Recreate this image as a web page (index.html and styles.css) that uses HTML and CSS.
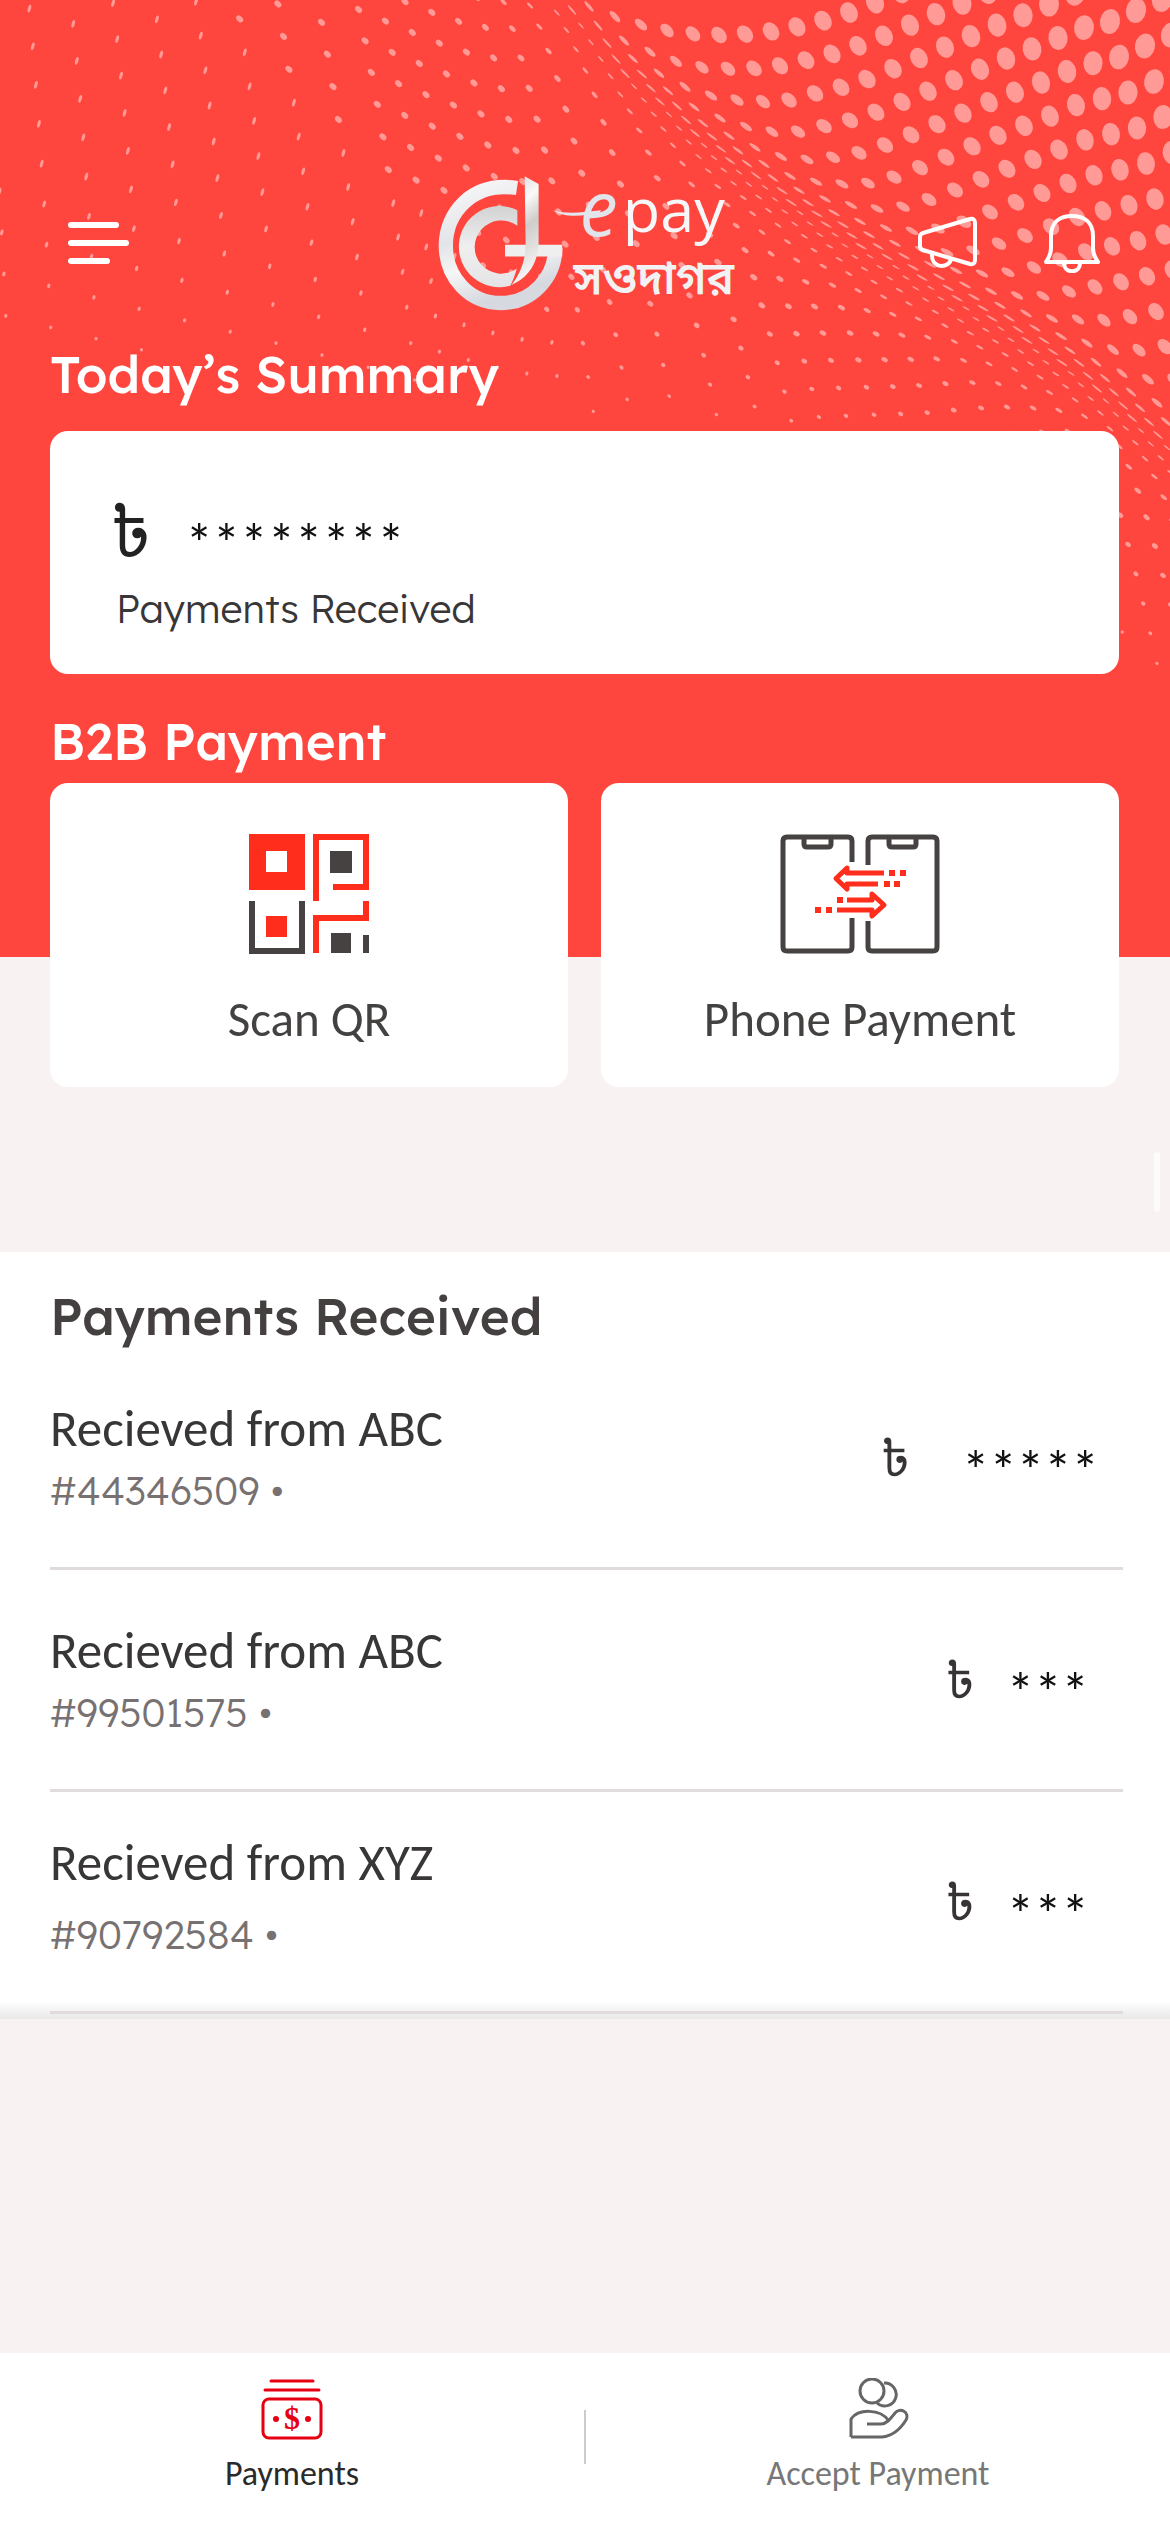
FILE: index.html
```html
<!DOCTYPE html>
<html lang="en">
<head>
<meta charset="utf-8">
<meta name="viewport" content="width=device-width">
<title>epay সওদাগর</title>
<link rel="stylesheet" href="styles.css">
</head>
<body>
<header class="hero">
  <svg class="halftone" id="halftone" viewBox="0 0 1170 957" preserveAspectRatio="xMaxYMin slice" aria-hidden="true"></svg>
  <div class="topbar">
    <button class="icon-btn" type="button" aria-label="Menu">
      <svg width="62" height="44" viewBox="0 0 62 44" fill="none" stroke="#fff" stroke-width="6" stroke-linecap="round"><path d="M3 4H48M3 22H58M3 40H39"/></svg>
    </button>
    <svg class="logo" width="297" height="138" viewBox="50 40 890 415" role="img" aria-label="epay সওদাগর">
      <defs>
        <linearGradient id="ring" x1="0" y1="0" x2="0.3" y2="1"><stop offset="0" stop-color="#f7f7f8"/><stop offset=".45" stop-color="#e3e4e8"/><stop offset=".7" stop-color="#f6f6f7"/><stop offset="1" stop-color="#d6d9e0"/></linearGradient>
        <linearGradient id="core" x1="0" y1="0" x2="0" y2="1"><stop offset="0" stop-color="#d4d3d4"/><stop offset=".5" stop-color="#f0efef"/><stop offset="1" stop-color="#e4e4e6"/></linearGradient>
        <linearGradient id="stem" x1="0" y1="0" x2="0.2" y2="1"><stop offset="0" stop-color="#d5d5d7"/><stop offset=".3" stop-color="#fafafa"/><stop offset=".55" stop-color="#cfccca"/><stop offset="1" stop-color="#f5f5f5"/></linearGradient>
      </defs>
      <path d="M292 82C155 62 78 158 78 255C78 352 150 428 243 428C335 428 407 352 407 262" fill="none" stroke="url(#ring)" stroke-width="43"/>
      <path d="M293 149A122 122 0 1 0 272 376C280 360 286 345 291 325A80 80 0 1 1 293 196Z" fill="url(#core)"/>
      <path d="M256 253H428V288H256Z" fill="#efeff0"/>
      <path d="M315 47L357 70V250C354 310 325 352 275 374C302 340 318 300 318 250Z" fill="url(#stem)"/>
      <path d="M400 149C450 164 500 152 545 149L540 158C500 163 440 176 400 149Z" fill="#e4e7ee"/>
      <text class="logo-e" x="480" y="226">e</text>
      <text class="logo-pay" x="610" y="214">pay</text>
      <text class="logo-bn" x="462" y="402">সওদাগর</text>
    </svg>
    <div class="actions">
      <button class="icon-btn" type="button" aria-label="Announcements">
        <svg width="60" height="60" viewBox="0 0 60 60" fill="none" stroke="#fff" stroke-width="4" stroke-linejoin="round" stroke-linecap="round"><path d="M5 20L52 6Q57 5 57 10V47Q57 52 52 51L5 37Q2 36 2 33V24Q2 21 5 20ZM14 41C13 56 31 56 33 46"/></svg>
      </button>
      <button class="icon-btn" type="button" aria-label="Notifications">
        <svg width="56" height="60" viewBox="0 0 56 60" fill="none" stroke="#fff" stroke-width="4" stroke-linejoin="round"><path d="M7 23C7 9 16 3 28 3S49 9 49 23V35C49 42 52 46 54 49H2C4 46 7 42 7 35ZM20 50C20 61 36 61 36 50"/></svg>
      </button>
    </div>
  </div>

  <h2 class="heading">Today’s Summary</h2>
  <section class="card summary">
    <p class="total"><span class="taka taka-lg">৳</span><span class="mask">********</span></p>
    <p class="caption">Payments Received</p>
  </section>

  <h2 class="heading b2b-heading">B2B Payment</h2>
  <div class="tiles">
    <button class="card tile" type="button">
      <svg width="120" height="120" viewBox="0 0 120 120" aria-hidden="true">
        <path fill="#ff2d1b" fill-rule="evenodd" d="M0 0H56V56H0ZM17 17V38H38V17Z"/>
        <path fill="none" stroke="#ff2d1b" stroke-width="6" d="M67 67V3H117V53H84M67 119V84H117V67"/>
        <path fill="none" stroke="#464241" stroke-width="6" d="M3 67V117H53V67M117 101V119"/>
        <path fill="#ff2d1b" d="M17 82H38V103H17Z"/>
        <path fill="#464241" d="M81 17H103V39H81ZM82 99H102V119H82Z"/>
      </svg>
      <span>Scan QR</span>
    </button>
    <button class="card tile" type="button">
      <svg width="160" height="120" viewBox="0 0 160 120" fill="none" stroke-width="5" aria-hidden="true">
        <path stroke="#464241" d="M72 28V7Q72 3 68 3H7Q3 3 3 7V113Q3 117 7 117H68Q72 117 72 113V84M88 31V7Q88 3 92 3H153Q157 3 157 7V113Q157 117 153 117H92Q88 117 88 113V87M24 3V10Q24 13 27 13H48Q51 13 51 10V3M109 3V10Q109 13 112 13H133Q136 13 136 10V3"/>
        <path stroke="#ff2d1b" stroke-linejoin="round" d="M104 39H67V34L56 44.500L67 55V50H98M67 66H92V60L104 71L92 82V76H57"/>
        <path stroke="#ff2d1b" stroke-width="6" d="M109 39H115M120 39H126M104 50H110M114 50H120M57 66H63M35 76H41M46 76H52"/>
      </svg>
      <span>Phone Payment</span>
    </button>
  </div>
</header>

<div class="spacer"><span class="scroll-hint"></span></div>

<main class="received">
  <h2 class="heading dark">Payments Received</h2>
  <ul class="rows">
    <li class="row">
      <div class="who"><span class="name">Recieved from ABC</span><span class="ref">#44346509 •</span></div>
      <p class="amount wide"><span class="taka">৳</span><span class="mask">*****</span></p>
    </li>
    <li class="row">
      <div class="who"><span class="name">Recieved from ABC</span><span class="ref">#99501575 •</span></div>
      <p class="amount"><span class="taka">৳</span><span class="mask">***</span></p>
    </li>
    <li class="row">
      <div class="who spaced"><span class="name">Recieved from XYZ</span><span class="ref">#90792584 •</span></div>
      <p class="amount"><span class="taka">৳</span><span class="mask">***</span></p>
    </li>
  </ul>
</main>

<nav class="tabs">
  <a class="tab active" href="#payments">
    <svg width="62" height="62" viewBox="0 0 62 62" fill="none" stroke="#e60012" stroke-width="3" stroke-linecap="round" aria-hidden="true"><path d="M10 3H52M4 12H58"/><rect x="2" y="21" width="58" height="39" rx="6"/><circle cx="15" cy="41" r="3" fill="#e60012" stroke="none"/><circle cx="47" cy="41" r="3" fill="#e60012" stroke="none"/><text class="note-sign" x="31" y="51" text-anchor="middle">$</text></svg>
    <span>Payments</span>
  </a>
  <span class="divider"></span>
  <a class="tab" href="#accept">
    <svg width="62" height="62" viewBox="0 0 62 62" fill="none" stroke="#666" stroke-width="3" stroke-linejoin="round" aria-hidden="true"><circle cx="25" cy="13" r="12"/><path d="M37 5A11.500 11.500 0 1 1 30 25M4 59V41C11 31 33 30 42 43M4 59H35C46 58 54 50 59 42C63 34 53 29 48 35C44 40 40 46 34 46H20"/></svg>
    <span>Accept Payment</span>
  </a>
</nav>
<script src="halftone.js"></script>
</body>
</html>
```

FILE: styles.css
```css
* { box-sizing: border-box; }

body {
  margin: 0;
  min-height: 100vh;
  display: flex;
  flex-direction: column;
  background: #f9f2f2;
  color: #383636;
  font-family: Carlito, Calibri, Lato, sans-serif;
}

h2, p, ul { margin: 0; padding: 0; }
ul { list-style: none; }
button { border: 0; background: none; padding: 0; font: inherit; color: inherit; }
svg { display: block; }

.hero {
  position: relative;
  padding: 174px 51px 0 50px;
  background: #ff463e;
}
.halftone { position: absolute; top: 0; left: 0; width: 100%; height: 100%; }

.topbar {
  position: relative;
  display: grid;
  grid-template-columns: 1fr auto 1fr;
  align-items: center;
  padding: 0 19px 0 18px;
}
.actions { display: flex; justify-content: flex-end; gap: 66px; }
.logo { overflow: visible; }
.logo-e { font: italic 500 230px "Open Sans", sans-serif; fill: #e1e4ea; }
.logo-pay { font: 500 184px "Open Sans", sans-serif; fill: #f7f7f9; }
.logo-bn { font: 600 138px "Noto Sans Bengali", "Noto Sans", sans-serif; fill: #f2f2f4; }

.heading {
  position: relative;
  margin-top: 30px;
  color: #fff;
  font: 500 51px/64px Lexend, "Noto Sans", sans-serif;
}
.b2b-heading { margin-top: 35px; }
.dark { margin: 0; color: #444040; }

.card { position: relative; background: #fff; border-radius: 18px; }

.summary { margin-top: 25px; padding: 60px 60px 41px; }
.total { display: flex; align-items: center; gap: 34px; height: 80px; }
.caption { padding: 0 6px; margin-top: 14px; font: 300 39px/48px Lexend, "Noto Sans", sans-serif; }
.taka { font: 400 50px/64px Lexend, "Noto Sans Bengali", "Noto Sans", sans-serif; color: #383434; }
.taka-lg { font-size: 70px; color: #222; }
.mask { padding-top: 28px; font-size: 55px; line-height: 64px; color: #111; }

.tiles {
  display: grid;
  grid-template-columns: 1fr 1fr;
  gap: 33px;
  margin: 10px 0 -130px;
}
.tile {
  display: flex;
  flex-direction: column;
  align-items: center;
  gap: 37px;
  height: 304px;
  padding-top: 51px;
  color: #444141;
  font-size: 49px;
  line-height: 56px;
}

.spacer {
  display: flex;
  justify-content: flex-end;
  align-items: flex-end;
  height: 295px;
  padding: 0 10px 40px;
}
.scroll-hint { width: 6px; height: 60px; border-radius: 3px; background: #fdfbfb; }

.received {
  padding: 32px 47px 5px 50px;
  background: linear-gradient(to top, #e9e8e8, #fff 18px);
}
.row {
  display: flex;
  justify-content: space-between;
  align-items: center;
  height: 222px;
  border-bottom: 3px solid #e0dbdc;
}
.who { display: flex; flex-direction: column; align-self: flex-end; gap: 10px; padding-bottom: 52px; }
.spaced { gap: 20px; }
.name { font-size: 51px; line-height: 56px; }
.ref { color: #787172; font: 300 39px/48px Lexend, "Noto Sans", sans-serif; }
.amount { display: flex; align-items: center; gap: 32px; padding-right: 34px; }
.wide { gap: 52px; padding-right: 24px; }

.tabs {
  display: grid;
  grid-template-columns: 1fr 2px 1fr;
  align-items: start;
  margin-top: auto;
  background: #fff;
}
.tab {
  display: flex;
  flex-direction: column;
  align-items: center;
  gap: 14px;
  padding: 25px 0 38px;
  color: #777;
  font-size: 34px;
  line-height: 40px;
  text-decoration: none;
}
.active { color: #2a2a2a; }
.divider { height: 54px; margin-top: 57px; background: #ccc; }
.note-sign { font: 700 32px "Liberation Serif", serif; fill: #e60012; stroke: none; }
```

FILE: halftone.js
```js
// Draws the wave of halftone dots behind the header.
(function () {
  var svg = document.getElementById('halftone');
  var NS = 'http://www.w3.org/2000/svg';
  // Crest of the wave, and the line below which the dots fade out.
  var crest = [[-600, -1160], [400, -160], [560, 0], [620, 70], [700, 140], [790, 205], [870, 252], [1000, 325], [1080, 375], [1170, 450], [1500, 720]];
  var end = [[-600, 330], [0, 340], [400, 380], [700, 430], [1000, 520], [1170, 690], [1500, 900]];

  function at(line, x) {
    for (var k = 1; k < line.length; k++) {
      if (x <= line[k][0] || k === line.length - 1) {
        var p = line[k - 1], q = line[k];
        return p[1] + (q[1] - p[1]) * (x - p[0]) / (q[0] - p[0]);
      }
    }
  }
  function ease(v) { return 1 - Math.exp(-v * v); }

  function dot(x, y, d) {
    var slope = Math.atan2(at(crest, x + 20) - at(crest, x - 20), 40) * 180 / Math.PI;
    var rx, ry, turn;
    if (d < 0) {
      var up = ease(-d / 75);
      var grow = Math.min(1, Math.max(0, (-d - 60) / 300));
      ry = 6.5 + 2 * up + 4 * grow;
      rx = 1 + 5.5 * up + 3.5 * grow;
      turn = slope - 90 + 60 * grow;
    } else {
      var fade = Math.min(1, Math.max(0, (at(end, x) - y) / 170));
      if (fade === 0) { return; }
      rx = (0.8 + 2 * ease(d / 70)) * (0.5 + 0.5 * fade);
      ry = 1.6 + 2.4 * fade;
      if (d > 350) { rx = 1.6; turn = 15; } else { turn = slope - 90; }
    }
    var e = document.createElementNS(NS, 'ellipse');
    e.setAttribute('rx', rx.toFixed(1));
    e.setAttribute('ry', ry.toFixed(1));
    e.setAttribute('transform', 'translate(' + x.toFixed(1) + ' ' + y.toFixed(1) + ') rotate(' + turn.toFixed(0) + ')');
    e.setAttribute('fill', '#ff9a96');
    svg.appendChild(e);
  }

  var x0 = 719 + 26 * 22;
  while (x0 > -300) {
    var t = (x0 - 719) / 26;
    var y = t > 6 ? 3 - 11 * (t - 6) : t < -5 ? 6 + 12 * (t + 5) : 35 - (t > 0 ? 0.9 : 1.15) * t * t;
    var x = x0;
    for (var j = 0; j < 90 && y < 720; j++) {
      var d = y - at(crest, x);
      if (y > -12 && x > -10 && x < 1185) { dot(x, y, d); }
      if (d < 0) {
        x += 9;
        d += 5 + 23 * ease(d / 65);
      } else {
        x += 10 * Math.exp(-d / 500);
        d += 5 + 17 * ease(d / 50) + 20 * ease(d / 550);
      }
      y = at(crest, x) + d;
    }
    x0 -= x0 > 330 ? 26 : 42;
  }
})();
```
